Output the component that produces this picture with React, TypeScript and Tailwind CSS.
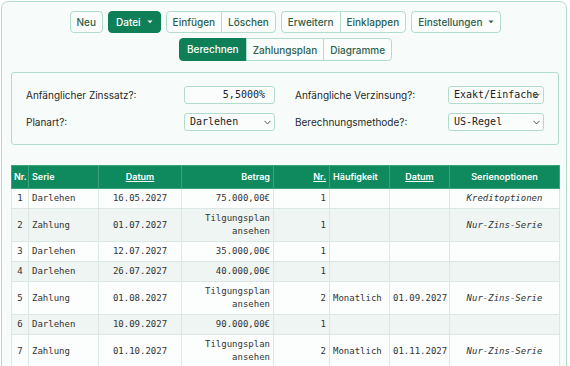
import React from "react";

const ui = { fontFamily: "Inter, 'Noto Sans', sans-serif" };
const mono = { fontFamily: "'DejaVu Sans Mono', 'Liberation Mono', monospace" };

type Row = {
  nr: number;
  serie: string;
  datum: string;
  betrag: string | null;
  anzahl: number;
  freq?: string;
  datum2?: string;
  option?: string;
};

const ROWS: Row[] = [
  { nr: 1, serie: "Darlehen", datum: "16.05.2027", betrag: "75.000,00€", anzahl: 1, option: "Kreditoptionen" },
  { nr: 2, serie: "Zahlung", datum: "01.07.2027", betrag: null, anzahl: 1, option: "Nur-Zins-Serie" },
  { nr: 3, serie: "Darlehen", datum: "12.07.2027", betrag: "35.000,00€", anzahl: 1 },
  { nr: 4, serie: "Darlehen", datum: "26.07.2027", betrag: "40.000,00€", anzahl: 1 },
  { nr: 5, serie: "Zahlung", datum: "01.08.2027", betrag: null, anzahl: 2, freq: "Monatlich", datum2: "01.09.2027", option: "Nur-Zins-Serie" },
  { nr: 6, serie: "Darlehen", datum: "10.09.2027", betrag: "90.000,00€", anzahl: 1 },
  { nr: 7, serie: "Zahlung", datum: "01.10.2027", betrag: null, anzahl: 2, freq: "Monatlich", datum2: "01.11.2027", option: "Nur-Zins-Serie" },
];

function Caret({ className }: { className: string }) {
  return (
    <svg width="6" height="4" viewBox="0 0 6 4" className={className}>
      <path d="M0.5 0.5h5L3 3.3z" fill="currentColor" />
    </svg>
  );
}

function Chevron() {
  return (
    <svg width="7" height="5" viewBox="0 0 7 5" className="absolute right-[3px] top-[6px] text-[#555]">
      <path d="M0.5 0.8L3.5 4L6.5 0.8" fill="none" stroke="currentColor" strokeWidth="1" />
    </svg>
  );
}

const btn =
  "h-[22px] border border-[#b2ddcc] bg-[#fafdfc] px-[6px] text-[10px] font-medium text-[#2c5f4c] leading-none flex items-center";

function Select({ value }: { value: string }) {
  return (
    <div
      className="relative h-[18px] whitespace-nowrap rounded-[3px] border border-[#b2ddcc] bg-[#fafdfc] pl-[5px] text-[10px] leading-[16px] text-[#222]"
      style={mono}
    >
      {value}
      <Chevron />
    </div>
  );
}

const th = "border border-[#3ea27d] px-[3px] py-[4px] font-semibold leading-[14px]";
const td = "border border-[#dbe7e3] px-[3px] py-[3px] leading-[13px]";

export default function App() {
  return (
    <div className="min-h-[366px] bg-white pl-px pt-px" style={ui}>
      <div className="w-[566px] rounded-t-[7px] border border-[#b2ddcc] bg-[#f7fbfa] pb-4 pl-[9px] pr-[6px] pt-[9px]">
        {/* toolbar */}
        <div className="flex justify-center gap-[5px]">
          <button className={`${btn} rounded-[4px]`}>Neu</button>
          <button className="flex h-[22px] items-center gap-[6px] rounded-[4px] border border-[#0f7f57] bg-[#0f7f57] px-[7px] text-[10px] font-medium leading-none text-white">
            Datei <Caret className="text-white" />
          </button>
          <div className="flex">
            <button className={`${btn} rounded-l-[4px]`}>Einfügen</button>
            <button className={`${btn} -ml-px rounded-r-[4px]`}>Löschen</button>
          </div>
          <div className="flex">
            <button className={`${btn} rounded-l-[4px]`}>Erweitern</button>
            <button className={`${btn} -ml-px rounded-r-[4px]`}>Einklappen</button>
          </div>
          <button className={`${btn} gap-[6px] rounded-[4px]`}>
            Einstellungen <Caret className="text-[#2c5f4c]" />
          </button>
        </div>
        <div className="mt-[5px] flex justify-center">
          <button className="flex h-[23px] items-center rounded-l-[4px] border border-[#0f7f57] bg-[#0f7f57] px-[7px] text-[10px] font-medium text-white">
            Berechnen
          </button>
          <button className={`${btn} h-[23px] -ml-px`}>Zahlungsplan</button>
          <button className={`${btn} h-[23px] -ml-px rounded-r-[4px]`}>Diagramme</button>
        </div>

        {/* settings */}
        <div className="mt-[11px] w-[548px] rounded-[3px] border border-[#b2ddcc] bg-[#f7fbfa] px-[14px] py-[13px]">
          <div className="grid grid-cols-[158px_91px_173px_96px] items-center gap-y-[9px] text-[10px] text-[#1e2a27]">
            <span>Anfänglicher Zinssatz?:</span>
            <div
              className="h-[18px] rounded-[3px] border border-[#b2ddcc] bg-[#fafdfc] pr-[9px] text-right text-[10px] leading-[16px] text-[#222]"
              style={mono}
            >
              5,5000%
            </div>
            <span className="pl-5">Anfängliche Verzinsung?:</span>
            <Select value="Exakt/Einfache" />
            <span>Planart?:</span>
            <Select value="Darlehen" />
            <span className="pl-5">Berechnungsmethode?:</span>
            <Select value="US-Regel" />
          </div>
        </div>

        {/* table */}
        <table className="mt-5 w-[548px] table-fixed border-collapse border border-[#d5e5df]">
          <colgroup>
            <col className="w-[17px]" />
            <col className="w-[70px]" />
            <col className="w-[83px]" />
            <col className="w-[92px]" />
            <col className="w-[56px]" />
            <col className="w-[60px]" />
            <col className="w-[60px]" />
            <col className="w-[110px]" />
          </colgroup>
          <thead>
            <tr className="bg-[#0f8a5e] text-[9px] text-white">
              <th className={`${th} !px-[2px] text-left`}>Nr.</th>
              <th className={`${th} text-left`}>Serie</th>
              <th className={`${th} text-center underline`}>Datum</th>
              <th className={`${th} text-right`}>Betrag</th>
              <th className={`${th} text-right underline`}>Nr.</th>
              <th className={`${th} text-left`}>Häufigkeit</th>
              <th className={`${th} text-center underline`}>Datum</th>
              <th className={`${th} text-center`}>Serienoptionen</th>
            </tr>
          </thead>
          <tbody className="text-[9px] text-[#333]" style={mono}>
            {ROWS.map((r, i) => (
              <tr key={r.nr} className={i % 2 === 1 ? "bg-[#eef5f2]" : "bg-[#fcfdfd]"}>
                <td className={`${td} text-center`}>{r.nr}</td>
                <td className={td}>{r.serie}</td>
                <td className={`${td} text-center`}>{r.datum}</td>
                <td className={`${td} text-right`}>
                  {r.betrag ?? (
                    <>
                      Tilgungsplan
                      <br />
                      ansehen
                    </>
                  )}
                </td>
                <td className={`${td} text-right`}>{r.anzahl}</td>
                <td className={td}>{r.freq}</td>
                <td className={`${td} text-center`}>{r.datum2}</td>
                <td className={`${td} text-center italic`}>{r.option}</td>
              </tr>
            ))}
          </tbody>
        </table>
      </div>
    </div>
  );
}
